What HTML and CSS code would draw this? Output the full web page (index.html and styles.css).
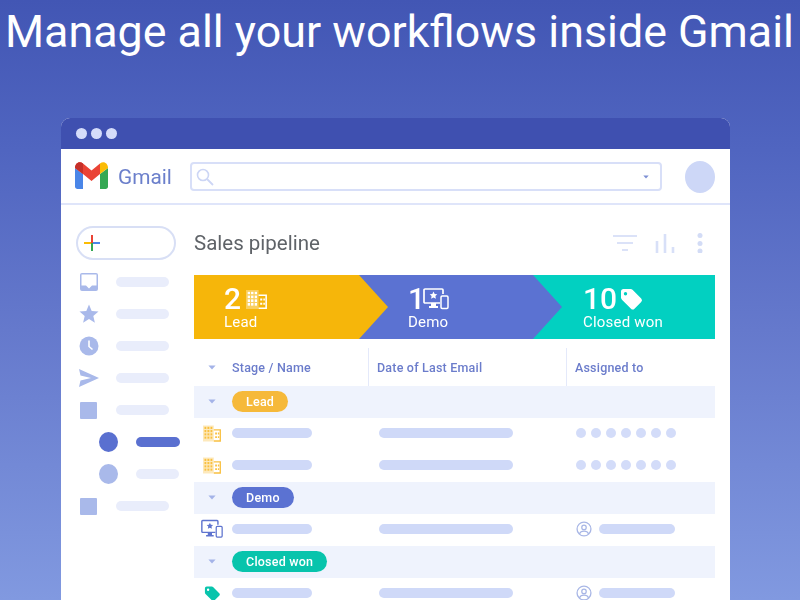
FILE: index.html
```html
<!DOCTYPE html>
<html lang="en">
<head>
<meta charset="utf-8">
<title>Manage all your workflows inside Gmail</title>
<link rel="stylesheet" href="styles.css">
</head>
<body>
<svg class="defs" width="0" height="0" aria-hidden="true">
  <symbol id="building" viewBox="0 0 20 18">
    <path d="M0 0h12v18H0zM1.500 1.500v2.600h2.300V1.500zm3.300 0v2.600h2.400V1.500zm3.400 0v2.600h2.300V1.500zM1.500 5.100v2.600h2.300V5.100zm3.300 0v2.600h2.400V5.100zm3.400 0v2.600h2.300V5.100zM1.500 8.700v2.600h2.300V8.700zm3.300 0v2.600h2.400V8.700zm3.400 0v2.600h2.300V8.700zM1.500 12.300v2.600h2.300v-2.600zm3.300 0v2.600h2.400v-2.600zm3.400 0v2.600h2.300v-2.600z" fill="currentColor" fill-opacity=".35" fill-rule="evenodd"/>
    <path d="M1.500 1.500h2.300v2.600H1.500zM4.800 1.500h2.400v2.600H4.800zM8.200 1.500h2.300v2.600H8.200zM1.500 5.100h2.300v2.600H1.500zM4.800 5.100h2.400v2.600H4.800zM8.200 5.100h2.300v2.600H8.200zM1.500 8.700h2.300v2.600H1.500zM4.800 8.700h2.400v2.600H4.800zM8.200 8.700h2.300v2.600H8.200zM1.500 12.300h2.300v2.600H1.500zM4.800 12.300h2.400v2.600H4.800zM8.200 12.300h2.300v2.600H8.200z" fill="currentColor"/>
    <path d="M12 5h7.200v12.300H12" fill="none" stroke="currentColor" stroke-width="1.500"/>
    <path d="M13.500 8h2v2h-2zM16.500 8h1.500v2h-1.500zM13.500 12h2v2h-2zM16.500 12h1.500v2h-1.500z" fill="currentColor"/>
  </symbol>
  <symbol id="demo" viewBox="0 0 26 22">
    <path d="M17 15H2a1 1 0 0 1-1-1V2a1 1 0 0 1 1-1h17a1 1 0 0 1 1 1v4" fill="none" stroke="currentColor" stroke-width="1.700"/>
    <path d="M10.500 3.500l1.200 2.500 2.600.3-1.900 1.800.5 2.600-2.400-1.300-2.400 1.300.5-2.600-1.900-1.800 2.600-.3zM8 15h5v3h2v2H6v-2h2z" fill="currentColor"/>
    <rect x="18" y="8" width="7" height="12.500" rx="1.200" fill="none" stroke="currentColor" stroke-width="1.500"/>
  </symbol>
  <symbol id="tag" viewBox="0 0 24 24">
    <path d="M2 4.500A2.500 2.500 0 0 1 4.500 2h7.200c.7 0 1.300.3 1.800.8l8.700 8.700a2.500 2.500 0 0 1 0 3.500l-6.700 6.700a2.500 2.500 0 0 1-3.500 0L3.200 13c-.8-.8-1.200-1.500-1.200-2.500zM6.500 5A1.700 1.700 0 1 0 6.500 8.400 1.700 1.700 0 0 0 6.500 5z" fill="currentColor" fill-rule="evenodd"/>
  </symbol>
  <symbol id="avatar" viewBox="0 0 18 18">
    <circle cx="9" cy="9" r="7.800" fill="none" stroke="currentColor" stroke-width="1.500"/>
    <circle cx="9" cy="7.200" r="2.500" fill="none" stroke="currentColor" stroke-width="1.400"/>
    <path d="M3.800 14.500c1-2.300 3-3 5.200-3s4.200.7 5.200 3" fill="none" stroke="currentColor" stroke-width="1.400"/>
  </symbol>
  <symbol id="caret" viewBox="0 0 10 6">
    <path d="M.5 .5h9L5 5.500z" fill="currentColor"/>
  </symbol>
</svg>

<h1 class="headline">Manage all your workflows inside Gmail</h1>

<div class="window">
  <div class="titlebar"><i class="light"></i><i class="light"></i><i class="light"></i></div>

  <header class="topbar">
    <svg class="gmail-logo" viewBox="0 0 33 27" aria-hidden="true">
      <path d="M0 6v18.500C0 26 1 27 2.500 27H8V12z" fill="#4a86e8"/>
      <path d="M33 6v18.500c0 1.500-1 2.500-2.500 2.500H25V12z" fill="#34a853"/>
      <path d="M0 6c0-5 4.500-7.500 8-4.500l8.500 7 8.500-7L25 12l-8.500 7L8 12 0 6z" fill="#ea4335"/>
      <path d="M0 6c0-5 4.500-7.500 8-4.500V12z" fill="#c5302a"/>
      <path d="M25 1.500C28.500-1.500 33 1 33 6l-8 6z" fill="#fbbc04"/>
    </svg>
    <span class="brand">Gmail</span>
    <div class="search">
      <svg class="search-icon" viewBox="0 0 18 18" aria-hidden="true">
        <circle cx="7" cy="7" r="5.500" fill="none" stroke="#cdd6f5" stroke-width="1.600"/>
        <path d="M11 11l6 6" stroke="#cdd6f5" stroke-width="1.800"/>
      </svg>
      <svg class="search-caret"><use href="#caret"/></svg>
    </div>
    <div class="profile"></div>
  </header>

  <div class="body">
    <aside class="sidebar">
      <div class="compose">
        <svg class="plus" viewBox="0 0 16 16" aria-hidden="true">
          <path d="M0 8h8" stroke="#fbbc04" stroke-width="2"/>
          <path d="M8 8h8" stroke="#4a86e8" stroke-width="2"/>
          <path d="M8 0v8" stroke="#ea4335" stroke-width="2"/>
          <path d="M8 8v8" stroke="#34a853" stroke-width="2"/>
        </svg>
      </div>
      <ul class="nav">
        <li class="nav-item">
          <svg class="nav-icon" viewBox="0 0 20 20" aria-hidden="true"><path d="M3 1h14a2 2 0 0 1 2 2v14a2 2 0 0 1-2 2H3a2 2 0 0 1-2-2V3a2 2 0 0 1 2-2zm-.500 1.500v11H7l3 3 3-3h4.500v-11z" fill="#a9b9ea" fill-rule="evenodd"/></svg>
          <span class="bar nav-bar"></span>
        </li>
        <li class="nav-item">
          <svg class="nav-icon" viewBox="0 0 20 20" aria-hidden="true"><path d="M10 .5l2.700 6.400 6.800.6-5.200 4.500 1.600 6.700L10 15.100 4.100 18.700l1.600-6.700L.5 7.500l6.800-.6z" fill="#a9b9ea"/></svg>
          <span class="bar nav-bar"></span>
        </li>
        <li class="nav-item">
          <svg class="nav-icon" viewBox="0 0 20 20" aria-hidden="true"><circle cx="10" cy="10" r="9.500" fill="#a9b9ea"/><path d="M10 4.500V10.500l3.500 3" fill="none" stroke="#fff" stroke-width="1.600"/></svg>
          <span class="bar nav-bar"></span>
        </li>
        <li class="nav-item">
          <svg class="nav-icon" viewBox="0 0 20 20" aria-hidden="true"><path d="M0 1l20 9L0 19l1.500-6.500L12 10 1.500 7.500z" fill="#a9b9ea"/></svg>
          <span class="bar nav-bar"></span>
        </li>
        <li class="nav-item">
          <span class="square"></span>
          <span class="bar nav-bar"></span>
        </li>
        <li class="nav-item sub">
          <span class="dot active"></span>
          <span class="bar sub-bar active"></span>
        </li>
        <li class="nav-item sub">
          <span class="dot"></span>
          <span class="bar sub-bar"></span>
        </li>
        <li class="nav-item">
          <span class="square"></span>
          <span class="bar nav-bar"></span>
        </li>
      </ul>
    </aside>

    <main class="main">
      <div class="toolbar">
        <h2 class="title">Sales pipeline</h2>
        <div class="tools">
          <svg class="tool-filter" viewBox="0 0 24 20" aria-hidden="true"><path d="M0 3h24M4 10h16M9 17h6" stroke="#dbe2f8" stroke-width="2.200"/></svg>
          <svg class="tool-chart" viewBox="0 0 20 20" aria-hidden="true"><path d="M2 8v12M10 1v19M18 14v6" stroke="#d8e0f8" stroke-width="2.600"/></svg>
          <svg class="tool-more" viewBox="0 0 6 20" aria-hidden="true"><circle cx="3" cy="2.500" r="2.500" fill="#d3dcf6"/><circle cx="3" cy="10.500" r="2.500" fill="#d3dcf6"/><circle cx="3" cy="18" r="2.500" fill="#d3dcf6"/></svg>
        </div>
      </div>

      <div class="pipeline">
        <div class="stage stage-lead">
          <div class="count"><b>2</b><svg class="stage-icon building"><use href="#building"/></svg></div>
          <div class="stage-name">Lead</div>
        </div>
        <div class="stage stage-demo">
          <div class="count"><b>1</b><svg class="stage-icon monitor"><use href="#demo"/></svg></div>
          <div class="stage-name">Demo</div>
        </div>
        <div class="stage stage-won">
          <div class="count"><b>10</b><svg class="stage-icon tag"><use href="#tag"/></svg></div>
          <div class="stage-name">Closed won</div>
        </div>
      </div>

      <div class="table">
        <div class="row head">
          <div class="cell-lead"><svg class="caret"><use href="#caret"/></svg></div>
          <div class="col-name">Stage / Name</div>
          <div class="col-date">Date of Last Email</div>
          <div class="col-owner">Assigned to</div>
        </div>

        <div class="row group">
          <div class="cell-lead"><svg class="caret"><use href="#caret"/></svg></div>
          <div class="col-name"><span class="pill pill-lead">Lead</span></div>
        </div>
        <div class="row">
          <div class="cell-lead"><svg class="row-icon amber"><use href="#building"/></svg></div>
          <div class="col-name"><span class="bar name-bar"></span></div>
          <div class="col-date"><span class="bar date-bar"></span></div>
          <div class="col-owner dots"><i></i><i></i><i></i><i></i><i></i><i></i><i></i></div>
        </div>
        <div class="row">
          <div class="cell-lead"><svg class="row-icon amber"><use href="#building"/></svg></div>
          <div class="col-name"><span class="bar name-bar"></span></div>
          <div class="col-date"><span class="bar date-bar"></span></div>
          <div class="col-owner dots"><i></i><i></i><i></i><i></i><i></i><i></i><i></i></div>
        </div>

        <div class="row group">
          <div class="cell-lead"><svg class="caret"><use href="#caret"/></svg></div>
          <div class="col-name"><span class="pill pill-demo">Demo</span></div>
        </div>
        <div class="row">
          <div class="cell-lead"><svg class="row-icon indigo"><use href="#demo"/></svg></div>
          <div class="col-name"><span class="bar name-bar"></span></div>
          <div class="col-date"><span class="bar date-bar"></span></div>
          <div class="col-owner person"><svg class="avatar"><use href="#avatar"/></svg><span class="bar owner-bar"></span></div>
        </div>

        <div class="row group">
          <div class="cell-lead"><svg class="caret"><use href="#caret"/></svg></div>
          <div class="col-name"><span class="pill pill-won">Closed won</span></div>
        </div>
        <div class="row">
          <div class="cell-lead"><svg class="row-icon teal"><use href="#tag"/></svg></div>
          <div class="col-name"><span class="bar name-bar"></span></div>
          <div class="col-date"><span class="bar date-bar"></span></div>
          <div class="col-owner person"><svg class="avatar"><use href="#avatar"/></svg><span class="bar owner-bar"></span></div>
        </div>
      </div>
    </main>
  </div>
</div>
</body>
</html>
```
FILE: styles.css
```css
* { box-sizing: border-box; }
html, body { margin: 0; height: 600px; overflow: hidden; }
body {
  font-family: Roboto, "Liberation Sans", sans-serif;
  background: linear-gradient(180deg, #4256b4 0%, #5065c0 25%, #6579cc 55%, #8199e0 100%);
  display: flex;
  flex-direction: column;
  align-items: flex-start;
}
.defs { display: block; height: 0; flex: none; }
.headline {
  flex: none;
  margin: 8px 0 0 5px;
  height: 110px;
  font-size: 44.800px;
  line-height: 48px;
  font-weight: 400;
  color: #fff;
  white-space: nowrap;
}
.window {
  margin-left: 61px;
  width: 669px;
  flex: none;
  height: 482px;
  background: #fff;
  border-radius: 9px 9px 0 0;
  overflow: hidden;
  filter: blur(.4px);
}
.titlebar {
  height: 31px;
  background: #3f50b0;
  display: flex;
  align-items: center;
  gap: 4px;
  padding: 0 0 1px 15px;
}
.light { width: 11px; height: 11px; border-radius: 50%; background: #d5dcfa; }

.topbar {
  height: 56px;
  border-bottom: 2px solid #dfe5fa;
  display: flex;
  align-items: center;
  padding: 1px 15px 0 14px;
}
.gmail-logo { width: 33px; height: 27px; flex: none; margin-top: -2px; }
.brand { margin-left: 10px; width: 72px; font-size: 20.800px; color: #6b7fcb; }
.search {
  flex: 1;
  height: 29px;
  border: 2px solid #d8dff8;
  border-radius: 4px;
  display: flex;
  align-items: center;
  justify-content: space-between;
  padding: 0 11px 0 4px;
}
.search-icon { width: 18px; height: 18px; }
.search-caret { width: 6px; height: 4px; color: #7d8fd4; }
.profile { margin-left: 23px; width: 30px; height: 32px; border-radius: 50%; background: #cdd7f7; }

.body { display: flex; }
.sidebar { width: 133px; flex: none; padding: 21px 0 0 15px; }
.compose {
  width: 100px;
  height: 34px;
  border: 2px solid #d8dff5;
  border-radius: 17px;
  display: flex;
  align-items: center;
  padding-left: 6px;
}
.plus { width: 16px; height: 16px; }
.nav { list-style: none; margin: 6px 0 0; padding: 0; }
.nav-item { height: 32px; display: flex; align-items: center; padding-left: 3px; }
.nav-icon { width: 20px; height: 20px; flex: none; }
.square { width: 17px; height: 17px; margin: 0 2px 0 1px; border-radius: 1px; background: #a9b9ea; flex: none; }
.bar { display: block; height: 10px; border-radius: 5px; background: #cfd9f8; }
.nav-bar { margin-left: 17px; width: 53px; background: #e9edfb; }
.nav-item.sub { padding-left: 23px; }
.dot { width: 19px; height: 20px; border-radius: 50%; background: #a9b9ea; flex: none; }
.dot.active { background: #5a70d0; }
.sub-bar { margin-left: 18px; width: 43px; background: #e9edfb; }
.sub-bar.active { width: 44px; background: #5a70d0; }

.main { width: 521px; flex: none; }
.toolbar { height: 70px; display: flex; align-items: center; justify-content: space-between; padding: 6px 12px 0 0; }
.title { margin: 0; font-size: 20.500px; font-weight: 400; color: #5f6368; }
.tools { display: flex; align-items: center; }
.tool-filter { width: 24px; height: 20px; }
.tool-chart { margin-left: 18px; width: 20px; height: 20px; }
.tool-more { margin-left: 22px; width: 6px; height: 20px; }

.pipeline { display: flex; height: 64px; color: #fff; }
.stage {
  position: relative;
  padding: 9px 0 0 30px;
  clip-path: polygon(0 0, calc(100% - 29px) 0, 100% 50%, calc(100% - 29px) 100%, 0 100%);
}
.stage-lead { width: 194px; background: #f6b60a; z-index: 2; }
.stage-demo { width: 203px; margin-left: -29px; padding-left: 49px; background: #5b72d2; z-index: 1; }
.stage-won { width: 182px; margin-left: -29px; padding-left: 50px; background: #02d0c1; clip-path: none; }
.count { display: flex; align-items: center; height: 30px; }
.count b { font-size: 30px; line-height: 30px; font-weight: 500; }
.stage-icon { display: block; color: #fff; }
.building { margin-left: 5px; width: 21px; height: 19px; }
.monitor { margin-left: -2px; width: 26px; height: 24px; }
.tag { margin-left: 2px; width: 24px; height: 24px; }
.stage-name { font-size: 15px; line-height: 18px; margin-top: -1px; letter-spacing: .2px; color: #fff; }

.row { display: flex; align-items: center; height: 32px; padding-bottom: 2px; }
.row.head { height: 47px; padding: 9px 0 0; font-size: 12.500px; font-weight: 500; color: #6b7ccb; letter-spacing: .2px; }
.row.group { background: #eff3fd; }
.cell-lead { width: 38px; flex: none; display: flex; justify-content: center; padding-right: 2px; }
.col-name { width: 136px; flex: none; }
.col-date { width: 198px; flex: none; padding-left: 9px; }
.col-owner { flex: 1; padding-left: 10px; }
.head .col-date, .head .col-owner {
  display: flex; align-items: center; height: 38px;
  border-left: 1px solid #e4e9fa; padding-left: 8px;
}
.row:not(.head):not(.group) .col-date { padding-left: 11px; }
.name-bar { width: 80px; }
.date-bar { width: 134px; }
.caret { display: block; width: 8px; height: 5px; color: #a4b3e8; }
.pill {
  display: inline-flex; align-items: center; height: 21px; padding: 0 14px;
  border-radius: 11px; font-size: 12.500px; font-weight: 500; letter-spacing: .22px; color: #fff;
}
.pill-lead { background: #f6b93a; }
.pill-demo { background: #5b72d2; }
.pill-won { background: #08c4ac; }
.row-icon { display: block; width: 18px; height: 17px; }
.amber { color: #f9c040; }
.indigo { color: #5f74cf; width: 22px; height: 20px; }
.teal { color: #08c4ac; }
.dots { display: flex; gap: 5px; }
.dots i { width: 10px; height: 10px; border-radius: 50%; background: #d3dcf9; }
.person { display: flex; align-items: center; }
.avatar { width: 16px; height: 16px; color: #a9b7e6; flex: none; }
.owner-bar { margin-left: 7px; width: 76px; }
```
